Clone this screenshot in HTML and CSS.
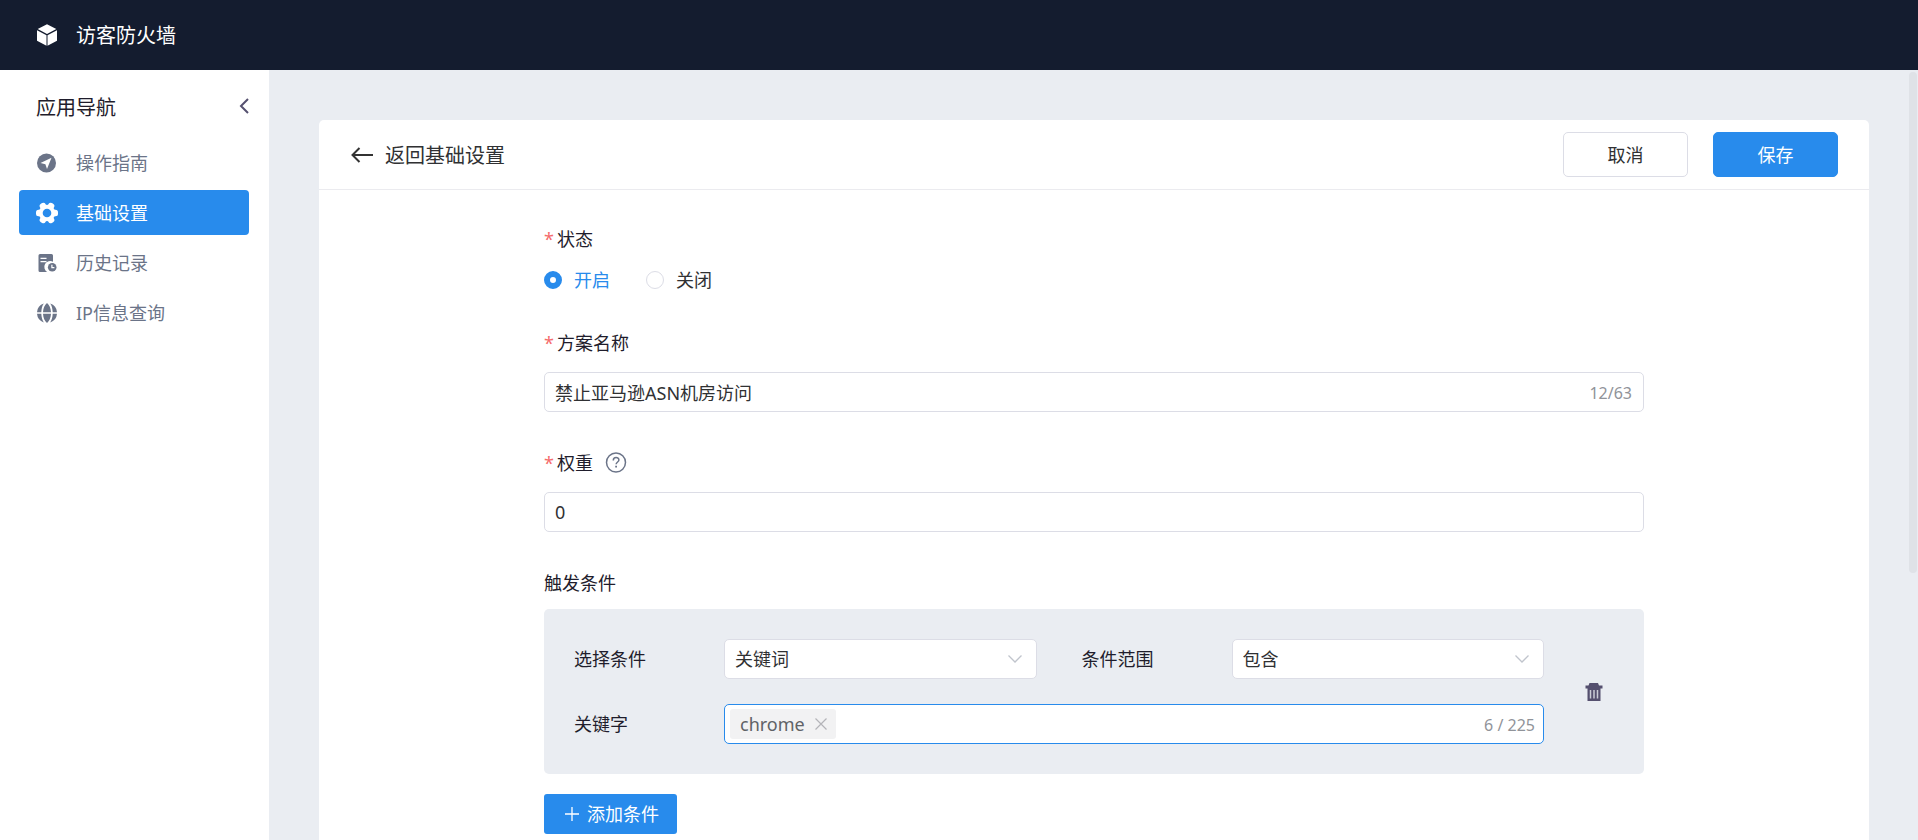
FILE: index.html
```html
<!DOCTYPE html>
<html lang="zh-CN">
<head>
<meta charset="utf-8">
<title>访客防火墙</title>
<link rel="stylesheet" href="styles.css">
</head>
<body>
<header class="topbar">
  <svg class="icon" viewBox="0 0 20 22" aria-hidden="true"><path fill="#fff" d="M10 .3 19.300 5 10 10 .7 5zM0 6.300l9.500 5V21.700L0 16.800zM20 6.300l-9.500 5V21.700L20 16.800z"/></svg>
  <span class="topbar-title">访客防火墙</span>
</header>
<div class="layout">
  <aside class="sidebar">
    <div class="sidebar-head">
      <h2 class="sidebar-title">应用导航</h2>
      <button class="icon-button collapse" type="button" aria-label="收起导航"><svg width="10" height="16" viewBox="0 0 10 16"><path d="M9 1 2 8l7 7" fill="none" stroke="#55506f" stroke-width="2"/></svg></button>
    </div>
    <nav class="menu">
      <a class="menu-item" href="#guide">
        <svg class="icon" viewBox="0 0 20 20" aria-hidden="true"><circle cx="9.500" cy="10" r="9.500" fill="#6b7488"/><path d="M14.500 4.700 3.500 9.900l4.900 1.400 1.600 4.700z" fill="#fff"/></svg>
        <span>操作指南</span></a>
      <a class="menu-item active" href="#basic" aria-current="page">
        <svg class="icon gear" viewBox="0 0 22 20" aria-hidden="true"><g fill="#fff"><circle cx="11" cy="10" r="8.300"/><rect x="0" y="6.800" width="22" height="6.400" rx="2.500"/><rect x="0" y="6.800" width="22" height="6.400" rx="2.500" transform="rotate(60 11 10)"/><rect x="0" y="6.800" width="22" height="6.400" rx="2.500" transform="rotate(120 11 10)"/></g><circle cx="11" cy="10" r="4.300" fill="#288bec"/></svg>
        <span>基础设置</span></a>
      <a class="menu-item" href="#history">
        <svg class="icon" viewBox="0 0 20 20" aria-hidden="true"><path d="M3 1h11.500A1.500 1.500 0 0 1 16 2.500V8.700A5.800 5.800 0 0 0 10.300 18.900H3A1.500 1.500 0 0 1 1.500 17.400V2.500A1.500 1.500 0 0 1 3 1z" fill="#6b7488"/><path d="M3.500 5.300h6M3.500 8.600h6" stroke="#fff" stroke-width="1.300"/><circle cx="15.200" cy="14.200" r="4.300" fill="#6b7488"/><path d="M14.900 11.700v3h2.500" fill="none" stroke="#fff" stroke-width="1.200"/></svg>
        <span>历史记录</span></a>
      <a class="menu-item" href="#ip">
        <svg class="icon" viewBox="0 0 20 20" aria-hidden="true"><g fill="#6b7488"><path d="M10 0C7.600 2 6.300 5 6 9.200h8C13.700 5 12.400 2 10 0zM10 20c-2.400-2-3.700-5-4-9.200h8C13.700 15 12.400 18 10 20z"/><path d="M6.800.6A9.900 9.900 0 0 0 0 9.200h4.300C4.500 5.800 5.200 2.800 6.800.6zM13.200.6A9.900 9.900 0 0 1 20 9.200h-4.300C15.500 5.800 14.800 2.800 13.200.6zM6.800 19.400A9.900 9.900 0 0 1 0 10.800h4.300c.2 3.400.9 6.400 2.500 8.600zM13.200 19.400a9.900 9.900 0 0 0 6.800-8.600h-4.300c-.2 3.400-.9 6.400-2.500 8.600z"/></g></svg>
        <span>IP信息查询</span></a>
    </nav>
  </aside>
  <main class="main">
    <section class="card">
      <header class="card-head">
        <a class="back" href="#basic">
          <svg width="22" height="16" viewBox="0 0 22 16" aria-hidden="true"><path d="M8.500 1 1.500 8l7 7M1.500 8H22" fill="none" stroke="#333" stroke-width="2"/></svg>
          <span>返回基础设置</span></a>
        <div class="card-actions">
          <button class="button" type="button">取消</button>
          <button class="button primary" type="submit" form="rule">保存</button>
        </div>
      </header>
      <form class="form" id="rule">
        <fieldset class="field">
          <legend class="label"><span class="required">*</span>状态</legend>
          <div class="radios">
            <label class="radio"><input type="radio" name="state" checked><span>开启</span></label>
            <label class="radio"><input type="radio" name="state"><span>关闭</span></label>
          </div>
        </fieldset>
        <div class="field">
          <label class="label" for="name"><span class="required">*</span>方案名称</label>
          <div class="control">
            <input class="text-input" id="name" type="text" value="禁止亚马逊ASN机房访问" maxlength="63">
            <span class="counter">12/63</span>
          </div>
        </div>
        <div class="field">
          <div class="label">
            <label for="weight"><span class="required">*</span>权重</label>
            <button class="icon-button help" type="button" aria-label="权重说明"><svg width="22" height="22" viewBox="0 0 22 22"><circle cx="11" cy="10.500" r="9.500" fill="none" stroke="#6b7488" stroke-width="1.500"/><path d="M8.300 8.500c0-4 5.600-3.700 5.600-.5 0 2-2.800 2-2.800 4.300" fill="none" stroke="#6b7488" stroke-width="1.500"/><path d="M10.200 13.700h1.800v1.800h-1.800z" fill="#6b7488"/></svg></button>
          </div>
          <div class="control">
            <input class="text-input" id="weight" type="text" inputmode="numeric" value="0">
          </div>
        </div>
        <section class="triggers">
          <h3 class="label">触发条件</h3>
          <div class="condition">
            <div class="condition-fields">
              <label for="kind">选择条件</label>
              <div class="select">
                <select id="kind"><option>关键词</option></select>
                <svg class="arrow" width="14" height="8" viewBox="0 0 14 8" aria-hidden="true"><path d="m.5.5 6.500 6.500L13.500.5" fill="none" stroke="#c0c4cc" stroke-width="1.300"/></svg>
              </div>
              <label class="second" for="scope">条件范围</label>
              <div class="select">
                <select id="scope"><option>包含</option></select>
                <svg class="arrow" width="14" height="8" viewBox="0 0 14 8" aria-hidden="true"><path d="m.5.5 6.500 6.500L13.500.5" fill="none" stroke="#c0c4cc" stroke-width="1.300"/></svg>
              </div>
              <label for="keyword">关键字</label>
              <div class="tags">
                <span class="tag">chrome<button class="icon-button" type="button" aria-label="移除 chrome"><svg width="12" height="12" viewBox="0 0 12 12"><path d="m.5.5 11 11m0-11-11 11" stroke="#b4b4b8" stroke-width="1.200"/></svg></button></span>
                <input class="text-input" id="keyword" type="text">
                <span class="counter">6 / 225</span>
              </div>
            </div>
            <div class="condition-action">
              <button class="icon-button" type="button" aria-label="删除条件"><svg width="18" height="18" viewBox="0 0 18 18"><path d="M4.500 0h8.500l1 2.500h3.500v3H15.500V18h-13V5.500H.5v-3h3z" fill="#55506f"/><path d="M5.500 7v8.500M9 7v8.500M12.500 7v8.500" stroke="#c9cbd6" stroke-width="1.500"/></svg></button>
            </div>
          </div>
          <button class="add" type="button"><svg width="16" height="16" viewBox="0 0 16 16" aria-hidden="true"><path d="M8 1v14M1 8h14" stroke="#fff" stroke-width="1.300"/></svg>添加条件</button>
        </section>
      </form>
    </section>
    <div class="scroll-thumb"></div>
  </main>
</div>
</body>
</html>
```
FILE: styles.css
```css
:root {
  --blue: #288bec;
  --page: #eaedf2;
  --line: #dcdde6;
  --ink: #1f1d2c;
  --text: #303133;
  --muted: #6b7488;
}

* { box-sizing: border-box; }

body {
  margin: 0;
  height: 100vh;
  display: flex;
  flex-direction: column;
  overflow: hidden;
  color: var(--ink);
  background: var(--page);
  font: 18px/24px "Noto Sans", "Noto Sans CJK SC", sans-serif;
}

input, select, button { font: inherit; color: inherit; }
button { cursor: pointer; }
svg { display: block; flex: none; }
h2, h3 { margin: 0; font-size: 18px; font-weight: 400; }

.icon { width: 20px; height: 22px; }
.icon.gear { width: 22px; margin: 0 -1px; }
.icon-button { display: flex; padding: 0; border: 0; background: none; }

.topbar {
  flex: none;
  display: flex;
  align-items: center;
  gap: 19px;
  height: 70px;
  padding: 0 37px;
  color: #fff;
  background: #141c2f;
  font-size: 20px;
}
.topbar-title, .back span { padding-top: 2px; }

.layout { flex: 1; min-height: 0; display: flex; }

.sidebar { flex: none; width: 269px; padding: 20px 20px 20px 19px; background: #fff; }
.sidebar-head {
  display: flex;
  align-items: center;
  justify-content: space-between;
  height: 34px;
  padding-left: 17px;
}
.sidebar-title { padding-top: 2px; font-size: 20px; }
.collapse { padding-bottom: 2px; }
.menu { display: flex; flex-direction: column; gap: 5px; padding-top: 16px; }
.menu-item {
  display: flex;
  align-items: center;
  gap: 19px;
  height: 45px;
  padding: 0 18px;
  border-radius: 4px;
  color: var(--muted);
  text-decoration: none;
}
.menu-item.active { color: #fff; background: var(--blue); }

.main {
  position: relative;
  flex: 1;
  min-width: 0;
  overflow: hidden;
  padding: 50px 49px 50px 50px;
}
.scroll-thumb {
  position: absolute;
  top: 2px;
  right: 1px;
  width: 8px;
  height: 65%;
  border-radius: 4px;
  background: #dfe2e7;
}

.card { padding-bottom: 50px; border-radius: 5px; background: #fff; }
.card-head {
  display: flex;
  align-items: center;
  justify-content: space-between;
  height: 70px;
  padding: 0 31px 0 32px;
  border-bottom: 1px solid #ebebef;
}
.back {
  display: flex;
  align-items: center;
  gap: 12px;
  color: var(--text);
  font-size: 20px;
  text-decoration: none;
}
.card-actions { display: flex; gap: 25px; }
.button {
  width: 125px;
  height: 45px;
  border: 1px solid var(--line);
  border-radius: 5px;
  color: var(--text);
  background: #fff;
}
.button.primary { border-color: var(--blue); color: #fff; background: var(--blue); }

.form {
  display: flex;
  flex-direction: column;
  gap: 36px;
  max-width: 1100px;
  margin: 0 auto;
  padding-top: 34px;
}
.field { min-width: 0; margin: 0; padding: 0; border: 0; }
.label { display: flex; align-items: center; height: 30px; padding: 0; }
.field > .label { margin-bottom: 14px; }
.required { margin-right: 3px; color: #f56c6c; }
.help { margin-left: 12px; }

.radios { display: flex; gap: 36px; }
.radio { display: flex; align-items: center; gap: 12px; color: var(--text); }
.radio:has(:checked) { color: var(--blue); }
.radio input {
  appearance: none;
  width: 18px;
  height: 18px;
  margin: 0;
  border: 1px solid var(--line);
  border-radius: 50%;
  background: #fff;
}
.radio input:checked { border: 6px solid var(--blue); }

.control, .tags {
  display: flex;
  align-items: center;
  height: 40px;
  padding: 0 11px 0 10px;
  border: 1px solid var(--line);
  border-radius: 5px;
  background: #fff;
}
.text-input {
  flex: 1;
  min-width: 0;
  height: 100%;
  padding: 0;
  border: 0;
  outline: 0;
  background: none;
  color: var(--text);
}
.counter { padding-top: 2px; color: #909399; font-size: 16px; }

.triggers { display: flex; flex-direction: column; align-items: flex-start; }
.condition {
  display: flex;
  width: 100%;
  margin: 11px 0 20px;
  border-radius: 5px;
  background: var(--page);
}
.condition-fields {
  flex: 1;
  display: grid;
  grid-template-columns: 150px 1fr 195px 1fr;
  align-items: center;
  row-gap: 25px;
  padding: 30px 0 30px 30px;
}
.second { padding-left: 45px; }
.select { position: relative; }
.select select {
  appearance: none;
  display: block;
  width: 100%;
  height: 40px;
  padding: 0 40px 0 10px;
  border: 1px solid var(--line);
  border-radius: 5px;
  color: var(--text);
  background: #fff;
}
.arrow { position: absolute; top: 16px; right: 15px; pointer-events: none; }

.tags { grid-column: 2 / -1; padding: 0 8px 0 5px; border-color: var(--blue); }
.tag {
  display: flex;
  align-items: center;
  gap: 10px;
  height: 30px;
  padding: 0 9px 0 10px;
  border-radius: 3px;
  color: #606266;
  background: #f2f2f3;
}
.condition-action {
  flex: none;
  display: flex;
  align-items: center;
  justify-content: center;
  width: 100px;
}

.add {
  display: flex;
  align-items: center;
  gap: 7px;
  height: 40px;
  padding: 0 18px 0 20px;
  border: 0;
  border-radius: 3px;
  color: #fff;
  background: var(--blue);
}
```
